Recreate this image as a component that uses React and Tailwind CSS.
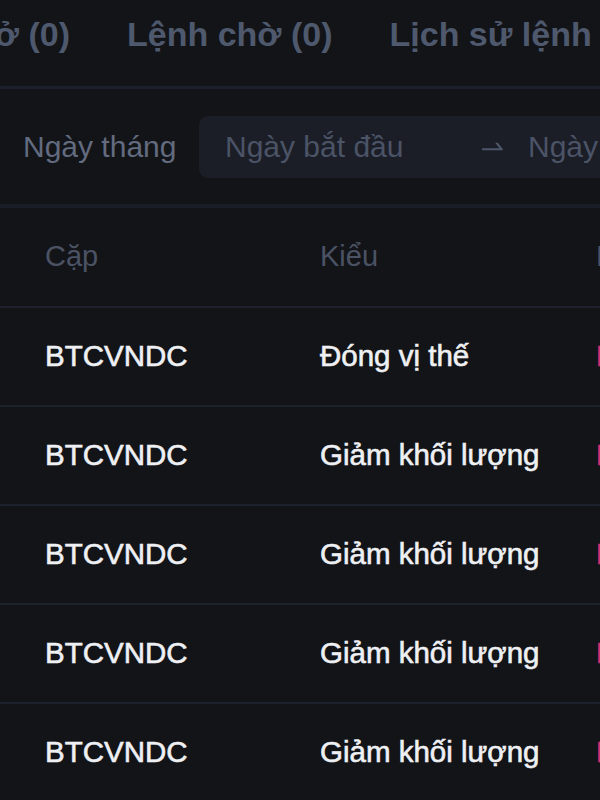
import React from "react";

const rows = [
  { pair: "BTCVNDC", type: "Đóng vị thế", side: "Bán" },
  { pair: "BTCVNDC", type: "Giảm khối lượng", side: "Bán" },
  { pair: "BTCVNDC", type: "Giảm khối lượng", side: "Bán" },
  { pair: "BTCVNDC", type: "Giảm khối lượng", side: "Bán" },
  { pair: "BTCVNDC", type: "Giảm khối lượng", side: "Bán" },
];

function SwapRight() {
  return (
    <svg viewBox="0 0 1024 1024" className="w-[29px] h-[29px] shrink-0" fill="#4e566a">
      <path d="M873.1 596.2l-164-208A32 32 0 00684 376h-64.8c-6.7 0-10.4 7.7-6.3 13l144.3 183H152c-4.4 0-8 3.6-8 8v60c0 4.4 3.6 8 8 8h695.9c26.8 0 41.7-30.8 25.2-51.8z" />
    </svg>
  );
}

export default function App() {
  return (
    <div className="w-[600px] h-[800px] overflow-hidden bg-[#131418] font-['Liberation_Sans',sans-serif]">
      {/* tabs */}
      <div className="h-[86px] flex items-center gap-[57px] whitespace-nowrap text-[34px] font-bold text-[#4f596e] pb-[18px]">
        <div className="w-[70px] shrink-0 overflow-hidden flex justify-end">
          <span>Vị thế mở (0)</span>
        </div>
        <span className="shrink-0">Lệnh chờ (0)</span>
        <span className="shrink-0">Lịch sử lệnh</span>
      </div>
      <div className="h-[3px] bg-[#1a1f2b]" />

      {/* date filter */}
      <div className="h-[115px] flex items-center pl-[23px] whitespace-nowrap">
        <span className="text-[30px] text-[#626b7f] w-[176px] shrink-0">Ngày tháng</span>
        <div className="h-[62px] flex-1 min-w-0 rounded-l-[9px] bg-[#1b1e27] flex items-center pl-[26px] text-[30px] text-[#4b5366] overflow-hidden">
          <span className="w-[253px] shrink-0">Ngày bắt đầu</span>
          <SwapRight />
          <span className="ml-[21px] shrink-0">Ngày kết thúc</span>
        </div>
      </div>
      <div className="h-[4px] bg-[#181d28]" />

      {/* table */}
      <div className="grid grid-cols-[275px_276px_1fr] h-[98px] items-center pl-[45px] text-[29px] text-[#4a5264] whitespace-nowrap">
        <span>Cặp</span>
        <span>Kiểu</span>
        <span className="overflow-hidden">Hướng</span>
      </div>
      {rows.map((r, i) => (
        <div key={i}>
          <div className="h-[2px] bg-[#1c212d]" />
          <div className="grid grid-cols-[275px_276px_1fr] h-[97px] items-center pl-[45px] text-[29.5px] text-[#eef0f3] [-webkit-text-stroke:0.6px_#eef0f3] whitespace-nowrap">
            <span>{r.pair}</span>
            <span>{r.type}</span>
            <span className="text-[#d22f6e] [-webkit-text-stroke:0.6px_#d22f6e] overflow-hidden">{r.side}</span>
          </div>
        </div>
      ))}
    </div>
  );
}
